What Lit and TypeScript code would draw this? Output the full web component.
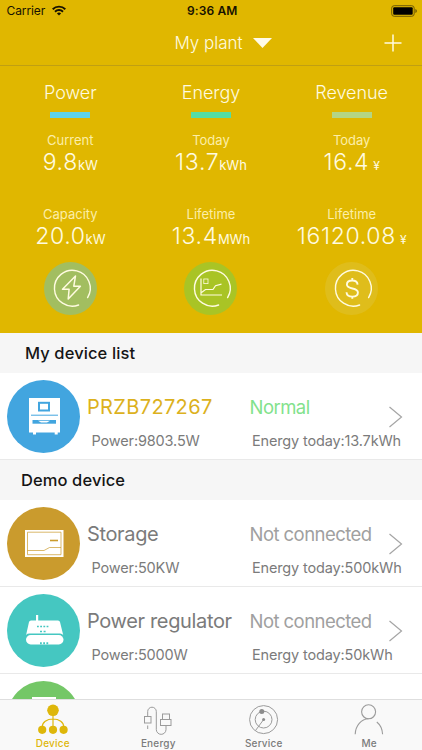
import { LitElement, html, css, svg, nothing } from "lit";
import { customElement, property } from "lit/decorators.js";

interface Reading { label: string; value: string; unit: string; gap?: boolean }
interface Stat { title: string; tone: string; icon: string; readings: Reading[] }
interface Device { name: string; status: string; power: string; energy: string; icon: string; live?: boolean }

const ring = svg`<path d="M43.6 35.6A17.9 17.9 0 1 0 34.6 43" stroke="#fffbe0" stroke-width="1.4" fill="none" stroke-linecap="round"/>`;

const statIcons: Record<string, unknown> = {
  bolt: svg`<circle cx="26.5" cy="26.5" r="26.5" fill="#a2be60"/>${ring}
    <path d="M31.5 14 18.5 27.2h6.6L24.2 37 36.4 24.2h-6.6z" fill="none" stroke="#fffbe0" stroke-width="1.5" stroke-linejoin="round"/>`,
  chart: svg`<circle cx="26.5" cy="26.5" r="26.5" fill="#a9c425"/>${ring}
    <path d="M17 16.5V33h21M17.5 30.5l4-3h7.5l2.5-3.8 6-1.5" fill="none" stroke="#fffbe0" stroke-width="1.2"/>
    <rect x="19.8" y="17" width="4.2" height="4.6" fill="none" stroke="#fffbe0" stroke-width=".8"/>`,
  dollar: svg`<circle cx="26.5" cy="26.5" r="26.5" fill="#dfbd1b"/>${ring}
    <path d="M32.6 22.6c-.2-2.6-2.3-4.1-5.4-4.1-3.2 0-5.3 1.6-5.3 4 0 5.4 11 2.6 11 7.9 0 2.6-2.2 4.2-5.5 4.2-3.5 0-5.7-1.6-5.9-4.4M27.3 16v2.5M27.3 34.5v2.3" fill="none" stroke="#fffbe0" stroke-width="1.9"/>`,
};

const deviceIcons: Record<string, unknown> = {
  cabinet: svg`<circle cx="36.5" cy="36.5" r="36.5" fill="#42a5df"/>
    <path d="M22 18h31v34.5h-2.3v2h-3v-2H29v2h-3v-2h-4z" fill="#fff"/>
    <rect x="32" y="22.8" width="10" height="7.7" fill="none" stroke="#42a5df" stroke-width="2"/>
    <path d="M24 35.2h27" stroke="#42a5df" stroke-width="1"/>
    <path d="M25.5 40h23.5v3.7H25.5z" fill="#42a5df"/><path d="M31 40.7h12l-3 1.7h-6z" fill="#fff"/>`,
  battery: svg`<circle cx="36.5" cy="36.5" r="36.5" fill="#ca9b2d"/>
    <rect x="18" y="23" width="38.5" height="27" fill="#fff"/>
    <path d="M20.5 25.2h33.5v22.5H20.5zM20.5 43.5h16.5l5.5-3H54" fill="none" stroke="#ca9b2d" stroke-width=".7"/>
    <path d="M43 33.5h8" stroke="#ca9b2d" stroke-width="1.6"/>`,
  router: svg`<circle cx="36.5" cy="36.5" r="36.5" fill="#45c7c1"/>
    <path d="M29 21h2.2v5.5H51q1.6 0 2 1.6l3.2 13q-1-1.5-3.2-1.5H22.5q-2.2 0-3.4 1.3L22 28q.4-1.5 2-1.5h5z" fill="#fff"/>
    <rect x="19" y="41" width="37.5" height="9.5" rx="4.7" fill="#fff"/>
    <path d="M30 32.5h11.5" stroke="#45c7c1" stroke-width="1.6" stroke-dasharray="1.8 1.4"/>
    <path d="M33 37.5h6" stroke="#45c7c1" stroke-width="1.3" stroke-dasharray="2 1.6"/>
    <path d="M33 49.2h9" stroke="#45c7c1" stroke-width="2" stroke-dasharray="1.8 1.4"/>`,
  meter: svg`<circle cx="36.5" cy="36.5" r="36.5" fill="#74c767"/><path d="M25 16h24v38H25z" fill="#fff"/>`,
};

const tabIcons: Record<string, unknown> = {
  device: svg`<g fill="#deb70a"><circle cx="22" cy="9.3" r="5.8"/><circle cx="11.2" cy="28.8" r="4.1"/><circle cx="22" cy="28.8" r="4.1"/><circle cx="32.6" cy="28.8" r="4.1"/></g>
    <path d="M22 14v12M11.2 26c0-4.5 4.5-8 10.800-8s10.800 3.5 10.800 8" fill="none" stroke="#deb70a" stroke-width="1.2"/>`,
  cable: svg`<g fill="none" stroke="#9b9b9b" stroke-width="1"><rect x="8.5" y="15.5" width="6.5" height="6.5"/>
    <path d="M11.7 15.5v-5a4.300 4.300 0 0 1 8.600 0V28.500a4.800 4.800 0 0 0 9.700 0V24.500M11.700 24.500v3.500"/>
    <rect x="26.5" y="13" width="7" height="5.5"/><rect x="24.5" y="18.5" width="10.5" height="6"/></g>`,
  radar: svg`<g fill="none" stroke="#9b9b9b" stroke-width="1"><circle cx="21.6" cy="18.6" r="14"/><circle cx="21.6" cy="18.6" r="8.4"/><path d="m21.6 18.6-8 10.8"/></g>
    <circle cx="21.6" cy="18.6" r="1.5" fill="#8c8c8c"/><circle cx="19.8" cy="10.6" r="2.5" fill="#8c8c8c"/>`,
  person: svg`<g fill="none" stroke="#9b9b9b" stroke-width="1.1"><circle cx="21.6" cy="10.8" r="7"/>
    <path d="M8.200 33.300c.3-8.500 6-15.200 13.400-15.500M29.800 21c3.400 2.700 5.500 7 5.800 12.300"/></g>`,
};

const stats: Stat[] = [
  { title: "Power", tone: "sky", icon: "bolt", readings: [{ label: "Current", value: "9.8", unit: "kW" }, { label: "Capacity", value: "20.0", unit: "kW" }] },
  { title: "Energy", tone: "mint", icon: "chart", readings: [{ label: "Today", value: "13.7", unit: "kWh" }, { label: "Lifetime", value: "13.4", unit: "MWh" }] },
  { title: "Revenue", tone: "sage", icon: "dollar", readings: [{ label: "Today", value: "16.4", unit: "¥", gap: true }, { label: "Lifetime", value: "16120.08", unit: "¥", gap: true }] },
];
const mine: Device[] = [{ name: "PRZB727267", status: "Normal", power: "9803.5W", energy: "13.7kWh", icon: "cabinet", live: true }];
const demo: Device[] = [
  { name: "Storage", status: "Not connected", power: "50KW", energy: "500kWh", icon: "battery" },
  { name: "Power regulator", status: "Not connected", power: "5000W", energy: "50kWh", icon: "router" },
  { name: "", status: "", power: "", energy: "", icon: "meter" },
];

@customElement("stat-column")
class StatColumn extends LitElement {
  @property({ attribute: false }) stat!: Stat;
  static styles = css`
    :host { display: flex; flex-direction: column; align-items: center; color: #fffbe0; white-space: nowrap; }
    .title { font-size: 18px; line-height: 24px; letter-spacing: -0.05px; }
    .bar { width: 40px; height: 5.5px; margin: 7px 0 14px; }
    .sky { background: #5fd3ea; } .mint { background: #55dda5; } .sage { background: #b4d584; }
    .reading { display: flex; flex-direction: column; align-items: center; }
    .reading + .reading { margin-top: 30px; }
    .label { font-size: 13px; line-height: 16px; font-weight: 400; letter-spacing: 0; color: #fceea8; }
    .value { font-size: 23px; line-height: 28px; height: 28px; letter-spacing: 0.65px; }
    .unit { font-size: 13px; line-height: 1; letter-spacing: 0; font-weight: 400; }
    .gap { margin-left: 4px; font-size: 12px; }
    svg { margin-top: 12.5px; width: 53px; height: 53px; }
  `;
  render() {
    const s = this.stat;
    return html`<div class="title">${s.title}</div><div class="bar ${s.tone}"></div>
      ${s.readings.map((r) => html`<div class="reading"><div class="label">${r.label}</div>
        <div class="value">${r.value}<span class="unit ${r.gap ? "gap" : ""}">${r.unit}</span></div></div>`)}
      <svg viewBox="0 0 53 53">${statIcons[s.icon]}</svg>`;
  }
}

@customElement("device-row")
class DeviceRow extends LitElement {
  @property({ attribute: false }) device!: Device;
  static styles = css`
    :host { display: grid; grid-template-columns: 80px 162.5px 139px 14px; height: 87px; padding-left: 7px; box-sizing: border-box;
      background: #fff; border-bottom: 1px solid #e9e9e9; color: #7b7b7b; font-weight: 400; white-space: nowrap; }
    .badge { width: 73px; height: 73px; margin-top: 7px; }
    .name { font-size: 20px; line-height: 26px; margin-top: 21px; letter-spacing: -0.35px; }
    .status { font-size: 18.5px; line-height: 26px; margin-top: 21px; letter-spacing: -0.55px; color: #a0a0a0; }
    .sub { font-size: 14.5px; line-height: 20px; margin: 10.5px 0 0 4.5px; letter-spacing: -0.15px; }
    .right { margin-left: 2.5px; }
    .live .name { color: #dcb11d; letter-spacing: 0.35px; } .live .status { color: #82e28c; }
    .arrow { width: 14px; height: 22px; margin-top: 33px; }
  `;
  render() {
    const d = this.device;
    const tone = d.live ? "live" : "";
    return html`<svg class="badge" viewBox="0 0 73 73">${deviceIcons[d.icon]}</svg>
      ${d.name ? html`<div class=${tone}><div class="name">${d.name}</div><div class="sub">Power:${d.power}</div></div>
      <div class=${tone}><div class="status">${d.status}</div><div class="sub right">Energy today:${d.energy}</div></div>
      <svg class="arrow" viewBox="0 0 14 22"><path d="m.5 1 12 10-12 10" fill="none" stroke="#a5a5a5" stroke-width="1.2"/></svg>` : nothing}`;
  }
}

@customElement("app-root")
class AppRoot extends LitElement {
  static styles = css`
    :host { display: flex; flex-direction: column; width: 422px; height: 750px; overflow: hidden; background: #fff;
      font-family: Inter, "Liberation Sans", sans-serif; font-weight: 300; }
    .hero { background: #e0b700; height: 333px; flex: none; }
    .statusbar { height: 21px; display: grid; grid-template-columns: 1fr auto 1fr; align-items: center; padding: 0 4px 0 6.5px; font-size: 12px; line-height: 21px; color: #171200; }
    .carrier { display: flex; align-items: center; gap: 7px; font-weight: 400; letter-spacing: -0.1px; }
    .time { font-weight: 600; letter-spacing: 0.15px; }
    .battery { justify-self: end; margin-right: 1px; }
    .nav { height: 44px; display: grid; grid-template-columns: 20px 1fr 20px; align-items: center; padding: 0 19px 0 21px; border-bottom: 1px solid #c09f12; color: #fffbe0; }
    .plant { display: flex; align-items: center; justify-content: center; gap: 10px; font-size: 17px; padding-left: 22px; }
    .stats { display: grid; grid-template-columns: repeat(3, 1fr); padding-top: 15px; }
    .list { flex: 1; min-height: 0; overflow: hidden; }
    .heading { height: 40px; line-height: 40px; font-size: 16.5px; font-weight: 500; color: #151515; background: #f6f6f6; padding-left: 25px; letter-spacing: 0.1px; }
    .demo { padding-left: 21px; }
    .tabs { flex: none; height: 51px; box-sizing: border-box; border-top: 1px solid #dedede; background: #f9f9f9; display: grid; grid-template-columns: repeat(4, 1fr); }
    .tab { display: flex; flex-direction: column; align-items: center; font-size: 10px; line-height: 12px; font-weight: 500; letter-spacing: 0.2px; color: #7b7b7b; }
    .tab svg { width: 44px; height: 36px; margin-top: 1px; }
    .active { color: #deb70a; }
  `;
  render() {
    const tabs = [["device", "Device"], ["cable", "Energy"], ["radar", "Service"], ["person", "Me"]];
    return html`
      <div class="hero">
        <div class="statusbar">
          <div class="carrier"><span>Carrier</span><svg width="14" height="11" viewBox="0 0 14 11"><g fill="none" stroke="#171200" stroke-width="1.9"><path d="M.7 4.2a9 9 0 0 1 12.6 0M3 6.7a5.7 5.7 0 0 1 8 0"/></g><path d="M4.9 8.5a3 3 0 0 1 4.2 0L7 10.6z" fill="#171200"/></svg></div>
          <div class="time">9:36 AM</div>
          <svg class="battery" width="26" height="12" viewBox="0 0 26 12"><rect x=".7" y=".7" width="22.5" height="10.6" rx="2.5" fill="none" stroke="#6f5b05"/><rect x="2.2" y="2.2" width="19.5" height="7.6" rx="1" fill="#000"/><path d="M24.500 4v4q1.200-.6 1.200-2t-1.200-2z" fill="#4a3c00"/></svg>
        </div>
        <div class="nav"><span></span>
          <div class="plant"><span>My plant</span><svg width="19" height="10" viewBox="0 0 19 10"><path d="M0 0h19L9.5 10z" fill="#fffbe8"/></svg></div>
          <svg width="20" height="20" viewBox="0 0 20 20"><path d="M1.5 10h17M10 1.5v17" stroke="#fffbe0" stroke-width="1.5"/></svg>
        </div>
        <div class="stats">${stats.map((s) => html`<stat-column .stat=${s}></stat-column>`)}</div>
      </div>
      <div class="list">
        <div class="heading">My device list</div>
        ${mine.map((d) => html`<device-row .device=${d}></device-row>`)}
        <div class="heading demo">Demo device</div>
        ${demo.map((d) => html`<device-row .device=${d}></device-row>`)}
      </div>
      <div class="tabs">${tabs.map(([icon, label], i) => html`<div class="tab ${i === 0 ? "active" : ""}"><svg viewBox="0 0 44 36">${tabIcons[icon]}</svg>${label}</div>`)}</div>`;
  }
}
